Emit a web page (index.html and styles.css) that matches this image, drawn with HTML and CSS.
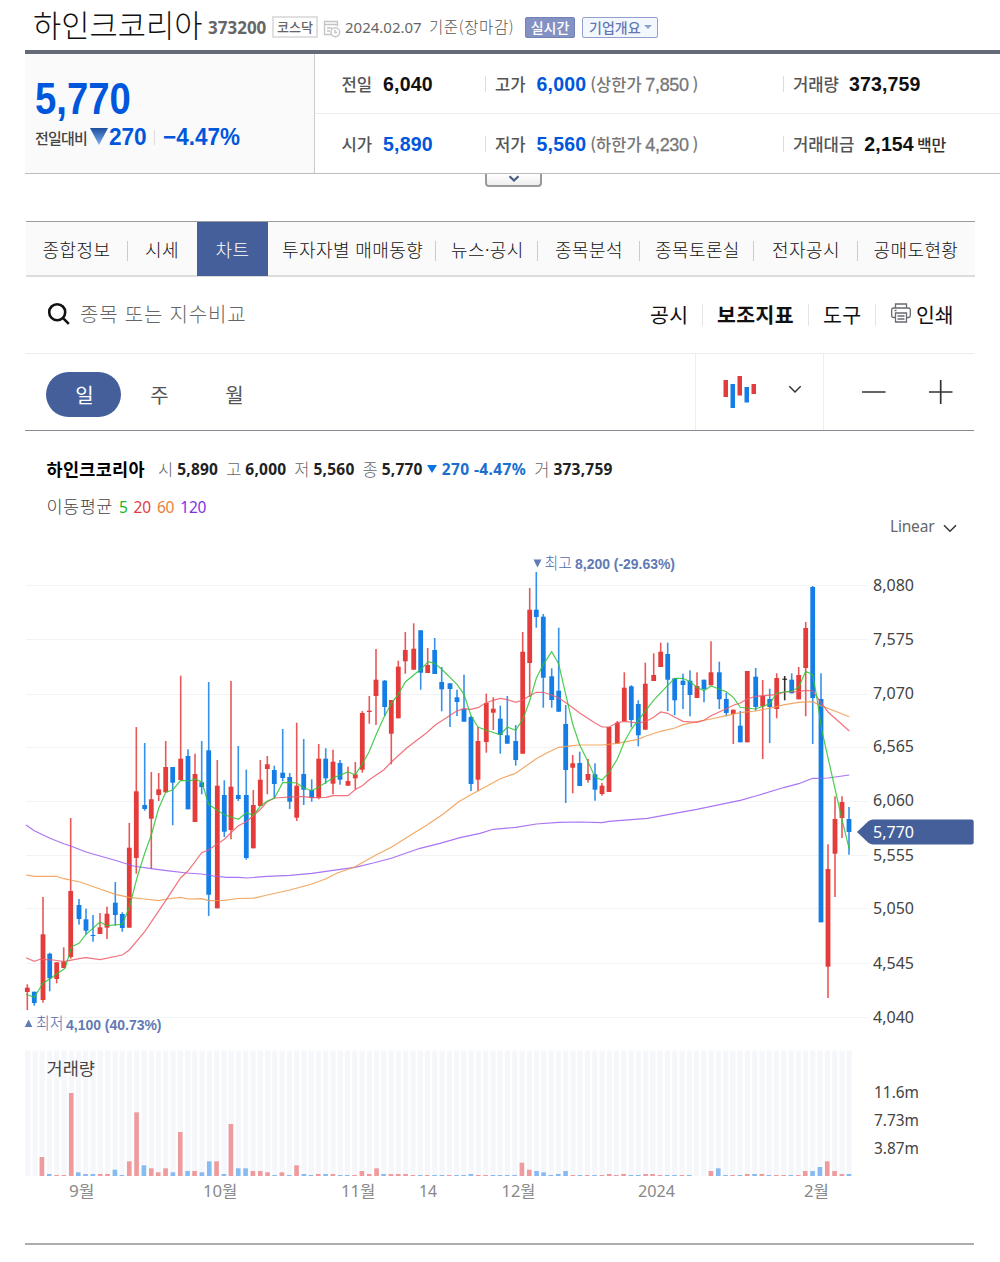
FILE: index.html
```html
<!DOCTYPE html>
<html lang="ko">
<head>
<meta charset="utf-8">
<title>하인크코리아 차트</title>
<link rel="stylesheet" href="styles.css">
</head>
<body>
<header class="title-row">
  <h1 class="name">하인크코리아</h1>
  <span class="code">373200</span>
  <span class="market">코스닥</span>
  <svg class="cal" width="18" height="18" viewBox="0 0 18 18" fill="none" stroke="#c4c4c4" stroke-width="1.4"><path d="M8 14.5H1.5V1.5h13v5M1.5 4.5h13M4 8h5M4 11h3"/><circle cx="12.3" cy="12.3" r="4.4"/><path d="M12 9.8v2.7h2.2"/></svg>
  <span class="date">2024.02.07</span>
  <span class="basis">기준(장마감)</span>
  <span class="live">실시간</span>
  <span class="overview">기업개요<i></i></span>
</header>

<section class="summary">
  <div class="now">
    <strong class="price">5,770</strong>
    <div class="change">
      <span class="vs">전일대비</span>
      <svg class="down" width="18" height="17" viewBox="0 0 18 17"><defs><linearGradient id="tri" x2="0" y2="1"><stop stop-color="#1d4f9c"/><stop offset="1" stop-color="#7ab0f0"/></linearGradient></defs><path d="M0 0h18L9 17z" fill="url(#tri)"/></svg>
      <b class="diff">270</b><i class="bar"></i><b class="rate">−4.47%</b>
    </div>
  </div>
  <div class="stats">
    <div class="cell"><span>전일</span><b>6,040</b></div>
    <div class="cell sep"><span>고가</span><b class="blue">6,000</b><em>(상한가 <u>7,850</u> )</em></div>
    <div class="cell sep"><span>거래량</span><b class="vol">373,759</b></div>
    <div class="cell"><span>시가</span><b class="blue">5,890</b></div>
    <div class="cell sep"><span>저가</span><b class="blue">5,560</b><em>(하한가 <u>4,230</u> )</em></div>
    <div class="cell sep"><span>거래대금</span><b class="amount">2,154</b><span class="unit">백만</span></div>
  </div>
</section>
<div class="more"><svg width="12" height="8" viewBox="0 0 12 8" fill="none" stroke="#4c5a86" stroke-width="2.2"><path d="M1.5 1.2 6 5.5l4.500-4.300"/></svg></div>

<nav class="tabs">
  <a class="t1">종합정보</a><a class="t2">시세</a><a class="on">차트</a><a class="t4">투자자별 매매동향</a><a class="t5">뉴스·공시</a><a class="t6">종목분석</a><a class="t7">종목토론실</a><a class="t8">전자공시</a><a class="t9">공매도현황</a>
</nav>

<div class="toolbar">
  <svg class="glass" width="24" height="24" viewBox="0 0 24 24" fill="none" stroke="#111" stroke-width="2.600"><circle cx="10.200" cy="10.200" r="8"/><path d="m15.800 15.800 6 6"/></svg>
  <span class="hint">종목 또는 지수비교</span>
  <div class="tools">
    <span class="k1">공시</span><b class="k2">보조지표</b><span class="k3">도구</span>
    <span class="k4"><svg width="20" height="20" viewBox="0 0 20 20" fill="none" stroke="#666b72" stroke-width="1.300"><path d="M4.500 5V1h11v4M4.500 14.500h-2a1.800 1.800 0 0 1-1.800-1.800V6.800A1.800 1.800 0 0 1 2.500 5h15a1.800 1.800 0 0 1 1.800 1.800v5.900a1.800 1.800 0 0 1-1.800 1.800h-2M4.500 10h11v9h-11zM6.500 13h7M6.500 16h7M3.500 7.500h2"/></svg>인쇄</span>
  </div>
</div>

<div class="period">
  <span class="day">일</span><span class="week">주</span><span class="month">월</span>
  <div class="kind">
    <svg width="34" height="34" viewBox="0 0 34 34"><path fill="#e43b3b" d="M.5 5h4.500v17H.5zM14.500 1H19v19.500h-4.500zM28.500 9H33v10h-4.500z"/><path fill="#147ee6" d="M7.500 9H12v24H7.500zM21.500 12H26v15.500h-4.500z"/></svg>
    <svg class="arrow" width="14" height="9" viewBox="0 0 14 9" fill="none" stroke="#333" stroke-width="1.500"><path d="m1.300 1.300 5.700 5.700 5.700-5.700"/></svg>
  </div>
  <div class="zooms"><svg width="92" height="26" viewBox="0 0 92 26" stroke="#333" stroke-width="1.700"><path d="M1 13h23.500M68 13h23.500M79.700 1v24"/></svg></div>
</div>

<div class="legend"><b class="who">하인크코리아</b><i>시</i><b>5,890</b><i>고</i><b>6,000</b><i>저</i><b>5,560</b><i>종</i><b>5,770</b><s></s><b class="bl">270 -4.47%</b><i>거</i><b>373,759</b></div>
<div class="averages"><span>이동평균</span><span class="a5">5</span><span class="a20">20</span><span class="a60">60</span><span class="a120">120</span></div>
<div class="scale"><span>Linear</span><svg width="14" height="9" viewBox="0 0 14 9" fill="none" stroke="#333" stroke-width="1.500"><path d="m1 1.300 6 6 6-6"/></svg></div>

<svg class="chart" id="chart" width="1000" height="670" viewBox="0 540 1000 670"></svg>
<div class="end"></div>
<script src="chart.js"></script>
</body>
</html>
```
FILE: styles.css
```css
* { box-sizing: border-box; }
body {
  margin: 0;
  width: 1000px;
  height: 1262px;
  overflow: hidden;
  background: #fff;
  color: #333;
  font-family: "Noto Sans", "Noto Sans CJK KR", sans-serif;
}
i, em, u, s { font-style: normal; text-decoration: none; }
span, b, em, i, a { white-space: nowrap; }

/* title */
.title-row { height: 50px; padding: 0 0 0 33px; display: flex; align-items: center; }
.name { margin: 0; width: 175px; font: 300 30.700px/50px "Noto Sans CJK KR", sans-serif; color: #111; padding-bottom: 2px; height: 50px; margin-top: -2px; }
.code { width: 64px; font-size: 17px; font-weight: 700; color: #666; margin-top: 5px; }
.market { width: 46px; height: 22px; margin-top: 3px; border: 2px solid #e0e0e0; font: 500 13px/17px "Noto Sans CJK KR", sans-serif; text-align: center; color: #666; }
.cal { margin: 7px 0 0 5px; }
.date { width: 84px; margin: 3px 0 0 4px; font-size: 15px; color: #666; }
.basis { width: 96px; margin-top: 1px; font: 300 15.500px "Noto Sans CJK KR", sans-serif; letter-spacing: .6px; color: #555; }
.live { width: 50px; height: 21px; margin-top: 4px; border-radius: 2px; background: #8492c3; border: 1px solid #7382b6; color: #fff; font: 500 14px/18px "Noto Sans CJK KR", sans-serif; text-align: center; }
.overview { width: 76px; height: 21px; margin: 4px 0 0 7px; border: 1px solid #929fce; border-width: 1.500px; border-radius: 2px; background: #f3f8ff; color: #6678b4; font: 500 14px/17px "Noto Sans CJK KR", sans-serif; padding-left: 6px; display: flex; align-items: center; gap: 3px; }
.overview i { border: 4px solid transparent; border-top-color: #8fa0cf; border-bottom: 0; }

/* price summary */
.summary { margin-left: 25.400px; height: 124px; border-top: 4px solid #646a78; border-bottom: 1px solid #bdbdbd; display: flex; }
.now { width: 290px; background: #fafafa; border-right: 1px solid #ccc; padding: 21px 0 0 9.500px; font-family: "Liberation Sans", "Noto Sans CJK KR", sans-serif; color: #0057dc; }
.price { display: block; height: 48px; font-size: 43.500px; line-height: 48px; transform: scaleX(.88); transform-origin: 0 50%; }
.change { height: 28px; display: flex; align-items: center; }
.vs { width: 55px; font: 500 15px "Noto Sans CJK KR", sans-serif; color: #444; letter-spacing: -.8px; }
.down { margin-top: -2px; }
.diff { width: 46px; font-size: 23.800px; padding-left: 1px; transform: scaleX(.95); transform-origin: 0 50%; }
.bar { width: 1px; height: 15px; background: #ddd; }
.rate { margin-left: 8px; font-size: 23.800px; transform: scaleX(.945); transform-origin: 0 50%; }
.stats { flex: 1; display: grid; grid-template-columns: 170px 298px 1fr; grid-template-rows: 59.500px 59.500px; }
.cell { display: flex; align-items: center; padding: 1.500px 0 0 26px; position: relative; font: 700 19.500px "Liberation Sans", sans-serif; color: #111; }
.cell:nth-child(-n+3) { border-bottom: 1px solid #ececec; }
.cell.sep { padding-left: 9.500px; }
.cell.sep::before { content: ""; position: absolute; left: 0; top: 22px; width: 1px; height: 16px; background: #ddd; }
.cell span { font: 500 16.700px "Noto Sans CJK KR", sans-serif; color: #555; }
.cell b { margin-left: 11px; letter-spacing: .15px; }
.cell .blue { color: #0057dc; }
.cell em { margin-left: 4px; color: #777; font: 500 16.500px "Noto Sans CJK KR", sans-serif; word-spacing: -1px; }
.cell u { font: 400 18px "Liberation Sans", sans-serif; letter-spacing: -.3px; -webkit-text-stroke: .3px #777; }
.cell .vol, .cell .amount { margin-left: 10px; }
.cell .unit { margin-left: 3px; color: #333; font-size: 16px; }
.more { width: 57px; height: 13.500px; margin: -.500px 0 0 485.400px; border: 2px solid #9a9a9a; border-top: 0; border-radius: 0 0 4px 4px; background: linear-gradient(#fff, #eee); display: flex; justify-content: center; align-items: center; }

/* tabs */
.tabs { margin: 34px 0 0 25.500px; width: 949px; height: 56px; background: #fafafa; border-top: 1.500px solid #9a9b9f; border-bottom: 2px solid #dcdcdc; display: flex; }
.tabs a { position: relative; font: 300 18px/55px "Noto Sans CJK KR", sans-serif; letter-spacing: .4px; color: #111; height: 54px; }
.tabs a:not(.t2):not(.on):not(.t9)::after { content: ""; position: absolute; right: 0; top: 19px; width: 1px; height: 20px; background: #ccc; }
.tabs .t1 { width: 102px; padding-left: 17px; }
.tabs .t2 { width: 69.500px; padding-left: 17.500px; }
.tabs .on { width: 70.500px; padding-left: 18.500px; background: #455f9b; color: #fff; }
.tabs .t4 { width: 168.500px; padding-left: 14.500px; }
.tabs .t5 { width: 102px; padding-left: 15px; }
.tabs .t6 { width: 102px; padding-left: 17px; }
.tabs .t7 { width: 114px; padding-left: 15px; }
.tabs .t8 { width: 103.500px; padding-left: 18px; }
.tabs .t9 { padding-left: 16px; }

/* toolbar */
.toolbar { margin-left: 25px; width: 949px; height: 76.500px; border-bottom: 1px solid #ececec; display: flex; align-items: center; padding-left: 22px; }
.glass { margin-top: -1px; }
.hint { margin: -2px 0 0 9px; font: 300 20px "Noto Sans CJK KR", sans-serif; letter-spacing: .8px; color: #666; }
.tools { margin: 0 0 0 auto; display: flex; align-items: center; height: 22px; font: 400 20.500px/22px "Noto Sans CJK KR", sans-serif; color: #111; }
.tools > * { border-left: 1px solid #e4e4e8; height: 22px; line-height: 20px; }
.tools .k1 { border: 0; width: 52px; letter-spacing: .4px; }
.tools .k2 { width: 106px; padding-left: 14px; letter-spacing: .4px; }
.tools .k3 { width: 67px; padding-left: 14px; letter-spacing: .4px; }
.tools .k4 { width: 99px; padding-left: 15px; display: flex; gap: 5px; }
.tools .k4 svg { margin-top: -1px; }

/* period */
.period { margin-left: 25px; width: 949px; height: 77.500px; border-bottom: 1.500px solid #888c92; display: flex; align-items: center; padding-left: 21px; font: 400 20px "Noto Sans CJK KR", sans-serif; color: #555; }
.day { width: 75px; height: 44.500px; margin-top: 5px; border-radius: 23px; background: #455f9b; color: #fff; text-align: center; line-height: 45px; padding-left: 2px; }
.week, .month { width: 75px; margin-top: 5px; padding-left: 2px; text-align: center; }
.kind { width: 129px; height: 76px; margin-left: auto; border: 1px solid #eee; border-width: 0 1px; display: flex; align-items: center; padding-left: 27px; }
.kind .arrow { margin: -5px 0 0 30.500px; }
.zooms { width: 150px; padding-left: 37px; height: 26px; display: flex; }

/* legends */
.legend { margin: 25px 0 0 46.500px; height: 26px; display: flex; align-items: center; font-size: 15.500px; color: #222; }
.legend b { letter-spacing: .22px; font-weight: 700; }
.legend i { font: 300 16.500px "Noto Sans CJK KR", sans-serif; color: #666; margin: 0 4px 0 8px; }
.legend .who { width: 103.500px; font: 700 17.500px/24px "Noto Sans CJK KR", sans-serif; letter-spacing: .3px; color: #000; }
.legend s { border: 5px solid transparent; border-top: 8px solid #0b74dc; border-bottom: 0; margin: 0 5px 0 4px; }
.legend .bl { color: #1a6fd0; letter-spacing: .4px; }
.averages { margin: 13px 0 0 46.500px; height: 24px; display: flex; align-items: center; gap: 6px; font-size: 15.500px; letter-spacing: -.2px; color: #555; }
.averages span:first-child { font: 300 17.500px/20px "Noto Sans CJK KR", sans-serif; letter-spacing: .5px; color: #444; margin-top: -3px; }
.averages .a5 { color: #18b61f; }
.averages .a20 { color: #e03c46; }
.averages .a60 { color: #ea8137; }
.averages .a120 { color: #7b35e0; }
.scale { margin: -2px 0 0 890px; height: 18px; display: flex; align-items: center; font-size: 15.500px; color: #666; }
.scale span { width: 53px; letter-spacing: -.2px; }
.scale svg { margin-top: 4px; }

/* chart */
.chart { display: block; margin-top: 5px; }
.axis { font: 15.700px "Noto Sans", sans-serif; fill: #444; }
.dates { font: 15.700px "Noto Sans", "Noto Sans CJK KR", sans-serif; fill: #888; }
.mark { font: 300 15.500px "Noto Sans CJK KR", sans-serif; fill: #4f6cae; }
.mark .num { font: 700 15.500px "Liberation Sans", sans-serif; fill: #5f7ab4; }
.vtitle { font: 400 17px "Noto Sans CJK KR", sans-serif; fill: #444; }
.end { margin: 33px 0 0 25.400px; width: 948.500px; height: 2px; background: #adadad; }
```
FILE: chart.js
```js
const RED = '#e43b3b', BLUE = '#147ee6';
// x, high, body top, body bottom, low, direction
const candles = `27.3 984.3 987.7 992 1010 R
34.3 991.7 991.7 1003 1005.7 B
43 897 934.3 1000 1002.7 R
49.7 952.7 953.7 978.3 991.3 B
56.7 962.3 962.3 979 983.3 R
63.7 947.3 961.7 968 968 R
70.7 818 891 957 958.7 R
79 899 905 919 924.7 B
86 908.7 919.3 930.7 934.7 B
93 915 935 936 941.7 B
100 913 927.3 934 934 R
107 906.7 913.7 927.7 939 R
115.3 882 902.7 915 925.7 B
122.3 912.3 914 928 931.7 B
129.3 823 847.7 927.7 927.7 R
136.3 727 791.3 858 873.7 R
144.7 743 805 809 810.7 B
151.3 772 799.3 818.7 869 R
158.7 773 789.3 795 801 R
165.7 741 767 792.3 792.3 R
172.7 767 767 782.7 825.3 B
180.7 675.7 758.7 780 781 R
188 749.3 756 809.3 809.3 B
195 753.7 774 822 822 R
201.7 741 782.3 787 794.3 B
208.7 682 750.3 894.7 916 B
217.3 760 785.7 908.3 908.3 R
224.3 780.3 795 831.7 837 B
231 681 786.7 830 839.3 R
238.3 746 795 799 801 B
246.3 769.7 795 858 859.7 B
253.3 790 805 848.3 848.3 R
260.3 760 779.7 806 806 R
267.3 756 764.3 769 794.3 R
274.3 765.7 770 784 798.3 B
282.7 729 772.7 778 781.3 B
289.7 773 777 801.7 809 B
296.7 722.7 785.7 817.7 821 R
303.7 739 774 789.7 805 B
311.7 779.3 790 798 801.7 B
318.7 744 758.7 798 799.3 R
325.7 748.3 758.7 778.3 783.7 B
333 749.7 761.7 783.7 794.3 R
340 760 763 779.7 784.7 B
348 766.7 781 785.7 785.7 R
355.3 762 774.3 778.3 789.3 R
362.3 711 713 769.7 772.7 R
369.3 696 710.7 712 723.7 R
376 649 679.7 696 725 R
384.7 680 680.7 707 716 B
391.3 700 700 733.7 764.3 R
398.3 660.7 666.7 718.3 718.3 R
405.3 632 650 661.3 673.7 R
413.7 623.3 648.7 669.7 669.7 R
420.7 630.3 630.3 672.7 689.7 B
427.7 648 665 673 673 R
434.7 638 650 674 674 B
441.7 667 682 689.3 711.3 B
450 683.3 683.3 689 727 B
457 689.7 697.3 702 716 B
464 674.7 708.7 721.7 721.7 B
471 715.7 717 784 791 B
478 727 741 779.7 791 R
486.3 693.7 703 742 752.7 R
493.3 697.3 708.7 712.7 730 R
500.3 705.7 718.7 735 753.7 B
507.3 696 735.3 743.7 743.7 B
515.7 725 741 760 765.7 B
522.7 632 651.7 753.7 753.7 R
529.7 588 609.7 663 697 R
536.3 572 609.7 617 627.7 B
543.3 614 616.7 677.7 707.7 B
551.7 668.3 676.3 700 707.7 B
558.7 627.7 690.7 711.7 711.7 B
565.7 705 724 770 803 B
572.7 755 763.3 767.7 793.3 R
579.7 751.7 763 786 786 B
588 759 774 780 782.7 R
595 763.3 774.3 789.7 800.7 B
602 783 785.7 794 795.7 R
609 727 727 792 792 R
617.3 721 722.7 743.7 743.7 R
624.3 672.3 687.7 721.3 721.3 R
631.3 685.3 686.3 720 727.3 B
638.3 700.3 704 735.3 746.3 B
645.3 662.7 683.7 729.7 729.7 R
653.7 653.3 675 681 681 R
660.7 642.7 651.7 667 667 R
667.7 642.7 654 679.7 711 B
674.7 678.3 678.3 700.3 715.3 B
683 673.7 680.7 685 709 B
690 670.3 680.7 695 716.3 B
697 672.3 686 698 698 R
704 679.7 679.7 689 702.3 B
711 641.3 672.3 685.3 685.3 R
719.3 661.7 672.3 699.3 709 B
726.3 692.7 699 713 716.3 B
733.3 709.7 709.7 714 744 R
740.3 711 725.7 742.3 742.3 B
747.3 671 671 742.3 742.3 R
755.7 668 676.7 707 710.7 B
762.7 680 696 706.3 759 R
769.7 688.7 699 707 743 B
776.7 673.3 678 709 718.3 R
784.7 676 678.7 679.7 700.3 K
791.7 673.3 679.7 693.3 693.3 B
798.7 667 675 699.3 699.3 R
805.7 622 628 668 716.3 R
812.7 586 587 698 744 B
821 673.3 699 922.3 922.3 B
828 844.3 869 966.7 998 R
835 796.3 819 853.7 897 R
842 796.3 802 818 838 R
849 807 819 832 854.7 B`.split('\n').map(r => r.split(' '));

const averages = {
  '#9b5cf0': '26,825 34.3,830.7 50,838.3 63.7,843.7 70.7,846 86,852 100,856 116.7,860.7 133.3,866 151.3,868.7 166.7,870.7 186.7,873 201.7,874 213.3,876 226.7,877.3 238.3,877.3 247.3,878 267.3,876.3 290,875.3 312,873.3 333,870.3 355,867.3 373.3,863 391.3,858.3 420,848.3 440,843.3 460,837.7 480,833.3 493.3,829.3 515.7,827.3 536.3,824 558.7,822.3 579.7,822 602,822.7 609,821.3 647.3,818.3 696.7,809.3 740.3,800.3 755.7,796 784.7,787.3 798.7,783.7 812.7,778.3 828.3,778 849.3,775',
  '#f09a4b': '26,875 34.3,876.3 56.7,876.3 63.7,878.7 80,882 100,889 115.3,894.3 129.3,897.3 144.7,899 158.7,900.7 166.7,899 180.7,897.3 188,899 201.7,898.7 208.7,900.7 224.3,900.3 238.3,898.5 253.3,898.2 267.3,895 290,890 312,884 326,878.7 336.7,873.3 355,866.7 376,855 391.3,847.3 412.3,834 426.7,825.3 443.3,814 458.3,802 470.7,794.7 478,791 500.3,778.7 515.7,773.3 536.3,758.7 546.7,753 558.7,747.3 572.7,745.7 579.7,745 602,745 617.3,743.3 638.3,739.3 645.3,736.3 660.7,731.3 674.7,728 683,724.7 697,721.7 711,719 726.3,715.7 740.3,712.7 755.7,711 772.3,707.7 784.7,704.7 798.7,702.3 812.7,701.7 821,705.7 835.3,711.3 849.3,716.7',
  '#ef5b66': '26,957.7 34.3,961.3 40,959.3 53.3,960 63.7,961.7 79,958.7 86,957.7 100,959.7 122.3,955 129.3,950 144.7,931.7 165.7,900.7 180.7,877.7 188,871 201.7,852.7 208.7,849.7 224.3,839.3 238.3,825.7 246.3,821.7 253.3,815.7 260,809.7 267.3,801.7 274.3,798 296.7,796.7 303.7,796.7 311.7,797.7 326,797.3 333,795.7 348,795.7 355,789.7 362.3,785.7 369.3,779.7 384,769.7 391.3,762 406.7,748 426.7,732.7 435.3,725 456.7,711 464,708.7 470.7,709.3 478,707.7 486.3,702.7 493.3,700.3 500.3,698.3 507.3,699.7 515.7,702.3 522.7,700 529.7,695.7 536.3,692.3 543.3,692.3 551.7,695 558.7,698 566.7,703.3 579.7,713 595,723 602,727 609,727 617.3,722.7 624.3,721.3 638.3,723 645.3,721.7 653.7,717.3 660.7,712 667.7,713.3 674.7,717.3 683,721.3 697,722.3 704,720.3 711,715.7 726.3,708.7 733.3,705.3 740.3,703 747.3,699 755.7,696.3 762.7,695.7 776.7,694.7 784.7,692 798.7,691.7 805.7,690.3 812.7,691 816.7,696.7 828.3,712.3 849.3,731',
  '#2fc334': '26,994.3 34.3,997.3 43,983.3 49.7,979 65,968.3 71.7,946.7 79,943.3 86,934.3 100,922 107,925.7 122.3,924.3 129.3,907.3 137.3,876.7 144.7,853.3 151.3,835 158.7,808.3 165.7,792.3 172.7,790 180.7,780.3 190,781 195,779 201.7,782 208.7,804.3 217.3,810.3 224.3,814.7 238.3,819.3 246.3,812.7 253.3,815.3 260.3,806.3 267.3,801 274.3,798.3 282.7,782.7 289.7,782.3 296.7,783 303.7,787.7 311.7,790.7 318.7,787 333,778 348,772 355.3,774.7 362.3,764 369,752 376.7,733.3 384,717.3 391.3,703.3 398.3,694.3 405.3,682 420.7,669.3 428.3,661.7 434.7,663.3 441.7,669.3 457,684.3 464,694.3 471,715.7 478,727 486.3,730.3 500.3,734.7 507.3,727 515.7,730.3 522.7,719.7 529.7,700.7 536.3,678.3 543.3,664.3 551.7,651.7 558.7,664 565.7,694.3 572.7,724 579.7,745 588,761.7 595,777 602,780 609,772.7 617.3,759 624.3,742 631.3,729.3 645,711.7 653.3,700.7 667.7,685.3 674.7,678.3 683,678.3 690,681.7 697,687.3 704,690.7 711,686 726.3,691.7 733.3,697.3 740.3,707.3 755.7,709 769.7,703.7 776.7,693 791.7,691 798.7,687.3 805.7,671.3 812.7,674.7 816.7,696.7 821.7,730 835.3,790 841.7,818.3 849.3,849.3'
};

const volumes = `- - R19 B2 R1 R1 R83 B3.7 B2 B2 R2 R2 B6.3 B1 R14.7 R63.7 B10.7 R7.7 R3.7 R7.7 B3.7 R44 B5 R5 B3.7 B14.7 R14.7 B2 R52 B7.7 B7.7 R5 R5 R3.7 B1 R3.7 B1 R10.7 B2 B1 R2 B2 R2 B1 B1 R1 R5 R2 R7.7 B2 R2 R2 R2 R1 B1 R1 B1 B1 R1 B1 B1 B2 R1 R1 B1 B1 B1 B1 R13.3 R6.3 B5 B3.7 B1 B2 B5 R1 B1 R1 B1 R1 R2 R1 R2 B1 B1 R2 R2 R1 B1 B1 R1 B1 - - R5 B7.7 B1 R1 B1 R2 B2 R2 B1 R1 R1 B1 R1 R5 B5 B9 R14.7 R5 R2 B2`.split(' ');

const rect = (x, y, w, h, fill) => `<rect x="${x}" y="${y}" width="${w}" height="${h}" fill="${fill}"/>`;
const text = (x, y, s, w, cls = '') => `<text x="${x}" y="${y}" class="${cls}" textLength="${w}" lengthAdjust="spacingAndGlyphs">${s}</text>`;
let out = '';

const grid = [[8080, 585.3], [7575, 639.3], [7070, 694], [6565, 747], [6060, 801], [5555, 855.7], [5050, 908.7], [4545, 963.3], [4040, 1017.5]];
for (const [v, y] of grid) {
  out += rect(26, Math.round(y - .5), 842, 1, '#f1f4f7');
  out += text(873, y + 5.3, v.toLocaleString('en-US'), 41, 'axis');
}
for (const [x, hi, top, bot, lo, d] of candles) {
  const c = d === 'R' ? RED : d === 'B' ? BLUE : '#111';
  out += `<g opacity=".85">${rect(x - .8, hi, 1.6, lo - hi, c)}</g>`;
  out += rect(x - 2.4, top, 4.8, Math.max(bot - top, 1), c);
}
for (const [c, pts] of Object.entries(averages))
  out += `<polyline points="${pts}" fill="none" stroke="${c}" stroke-width="1.200" opacity=".85"/>`;

volumes.forEach((v, i) => {
  const x = Math.round((27.6 + 7.27 * i) * 3) / 3;
  out += rect(x - 2.5, 1050.5, 5.2, 125.5, '#f5f7fb');
  if (v !== '-') {
    const h = +v.slice(1);
    out += rect(x - 2.4, 1176 - h, 4.6, h, v[0] === 'R' ? '#ef9a9c' : '#86bbf2');
  }
});

out += `<path d="M533.500 559.500h8l-4 8zM24.800 1027h7.500l-3.700-7.500z" fill="#5f7ab4"/>`;
out += `<g class="mark">${text(544.5, 568.5, '최고', 27.5)}${text(575, 569, '8,200 (-29.63%)', 100, 'num')}${text(36, 1028.500, '최저', 27.5)}${text(66, 1029.5, '4,100 (40.73%)', 95.500, 'num')}</g>`;
out += `<path d="M857 832 868 821.500q2.500-2 5-2h98.500q2.200 0 2.200 2.200v20.600q0 2.200-2.200 2.200H873q-2.500 0-5-2z" fill="#455f9b"/>`;
out += text(873, 837.8, '5,770', 41, 'axis tag');
out += text(46.5, 1075, '거래량', 48.500, 'vtitle');
[['11.6m', 1097.8, 45], ['7.73m', 1125.8, 45], ['3.87m', 1153.8, 45]].forEach(([s, y, w]) => out += text(874, y, s, w, 'axis'));
[['9월', 69, 25.5], ['10월', 203, 34.5], ['11월', 341, 34.5], ['14', 419, 18], ['12월', 501.5, 34], ['2024', 638, 37], ['2월', 804, 25]].forEach(([s, x, w]) => out += text(x, 1197, s, w, 'dates'));

document.getElementById('chart').innerHTML = out;
document.querySelector('.tag').style.fill = '#fff';
```
